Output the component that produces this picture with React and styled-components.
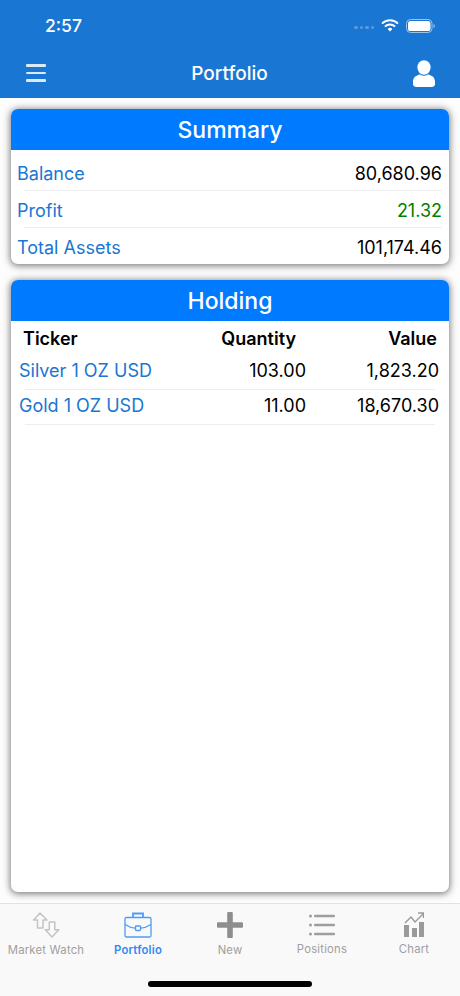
import React from "react";
import styled, { createGlobalStyle } from "styled-components";

const GlobalStyle = createGlobalStyle`
  html, body {
    margin: 0;
    padding: 0;
    background: #fff;
    font-family: Inter, "Liberation Sans", sans-serif;
  }
`;

const summary = [
  { label: "Balance", value: "80,680.96" },
  { label: "Profit", value: "21.32", green: true },
  { label: "Total Assets", value: "101,174.46", last: true },
];

const holdings = [
  { ticker: "Silver 1 OZ USD", quantity: "103.00", value: "1,823.20" },
  { ticker: "Gold 1 OZ USD", quantity: "11.00", value: "18,670.30" },
];

const App = () => {
  return (
    <Screen>
      <GlobalStyle />
      <TopBar>
        <StatusBar>
          <Clock>2:57</Clock>
          <StatusIcons>
            <Signal>
              <i /><i /><i /><i />
            </Signal>
            <svg width="18" height="13" viewBox="0 0 18 13">
              <path d="M1 4.600a11.500 11.500 0 0 1 16 0" fill="none" stroke="#fff" strokeWidth="2" />
              <path d="M3.900 7.600a7.400 7.400 0 0 1 10.200 0" fill="none" stroke="#fff" strokeWidth="2" />
              <path d="M6.600 10a3.500 3.500 0 0 1 4.800 0L9 12.600z" fill="#fff" />
            </svg>
            <svg width="29" height="14" viewBox="0 0 29 14">
              <rect x="0.500" y="0.500" width="25.500" height="13" rx="4" fill="none" stroke="#9cc3ec" />
              <rect x="2" y="2" width="22.500" height="10" rx="2.600" fill="#fff" />
              <path d="M27.500 5v4c.8-.3 1.300-1.100 1.300-2s-.5-1.700-1.300-2z" fill="#9cc3ec" />
            </svg>
          </StatusIcons>
        </StatusBar>
        <NavBar>
          <Burger>
            <span /><span /><span />
          </Burger>
          <NavTitle>Portfolio</NavTitle>
          <svg width="22" height="27" viewBox="0 0 22 27">
            <ellipse cx="11" cy="7.500" rx="6.600" ry="7.300" fill="#fff" />
            <path d="M7 14.500c2.400 1.700 5.600 1.700 8 0 4 .8 7 3.200 7 7v2.500c0 1.700-1.500 3-3.500 3h-15C1.500 27 0 25.700 0 24v-2.500c0-3.800 3-6.200 7-7z" fill="#fff" />
          </svg>
        </NavBar>
      </TopBar>

      <Content>
        <Card>
          <CardHeader>Summary</CardHeader>
          <SummaryList>
            {summary.map((row) => (
              <SummaryRow key={row.label} $last={row.last}>
                <RowLabel>{row.label}</RowLabel>
                <RowValue $green={row.green}>{row.value}</RowValue>
              </SummaryRow>
            ))}
          </SummaryList>
        </Card>

        <HoldingCard>
          <CardHeader>Holding</CardHeader>
          <TableHead>
            <span>Ticker</span>
            <HeadQty>Quantity</HeadQty>
            <HeadValue>Value</HeadValue>
          </TableHead>
          {holdings.map((row) => (
            <TableRow key={row.ticker}>
              <RowLabel>{row.ticker}</RowLabel>
              <QtyCell>{row.quantity}</QtyCell>
              <ValueCell>{row.value}</ValueCell>
            </TableRow>
          ))}
        </HoldingCard>
      </Content>

      <TabBar>
        <Tab>
          <TabIcon>
            <svg width="28" height="26" viewBox="0 0 28 26" fill="none" stroke="#c4c4c4" strokeWidth="1.500" strokeLinejoin="round">
              <path d="M8 1L1.500 8h4v8h5.500V8h4z" />
              <path d="M20 25l6.800-7.300h-4V10h-5.500v7.700h-4z" fill="#fafafa" />
            </svg>
          </TabIcon>
          <TabLabel>Market Watch</TabLabel>
        </Tab>
        <Tab>
          <TabIcon>
            <svg width="28" height="26" viewBox="0 0 28 26" fill="none" stroke="#4d9cf5" strokeWidth="1.300">
              <rect x="1" y="5.500" width="26" height="19.500" rx="1.500" />
              <path d="M9 5.500V1.500h10v4" strokeWidth="1.800" />
              <path d="M1 12.500c4 2.600 8 3.500 10.500 3.600M27 12.500c-4 2.600-8 3.500-10.500 3.600" />
              <rect x="11.500" y="14" width="5" height="4.500" rx="0.800" />
            </svg>
          </TabIcon>
          <TabLabel $active>Portfolio</TabLabel>
        </Tab>
        <Tab>
          <TabIcon>
            <svg width="28" height="26" viewBox="0 0 28 26">
              <rect x="11.200" y="0" width="5.600" height="26" rx="1" fill="#8e8e8e" />
              <rect x="1" y="10.200" width="26" height="5.600" rx="1" fill="#8e8e8e" />
            </svg>
          </TabIcon>
          <TabLabel>New</TabLabel>
        </Tab>
        <Tab>
          <TabIcon>
            <svg width="26" height="22" viewBox="0 0 26 22" fill="#9e9e9e">
              <circle cx="1.500" cy="2" r="1.500" />
              <circle cx="1.500" cy="11" r="1.500" />
              <circle cx="1.500" cy="20" r="1.500" />
              <rect x="5" y="0.700" width="21" height="2.600" rx="1" />
              <rect x="5" y="9.700" width="21" height="2.600" rx="1" />
              <rect x="5" y="18.700" width="21" height="2.600" rx="1" />
            </svg>
          </TabIcon>
          <TabLabel>Positions</TabLabel>
        </Tab>
        <Tab>
          <TabIcon>
            <svg width="20" height="25" viewBox="0 0 20 25" fill="#9a9a9a">
              <rect x="0" y="13" width="5" height="12" />
              <rect x="8" y="16" width="5" height="9" />
              <rect x="15" y="10" width="5" height="15" />
              <path d="M1 11l6-6 4 5 8.500-8.500M14 1h5.500v5" fill="none" stroke="#9a9a9a" strokeWidth="1.400" />
            </svg>
          </TabIcon>
          <TabLabel>Chart</TabLabel>
        </Tab>
        <HomeIndicator />
      </TabBar>
    </Screen>
  );
};

export default App;

const Screen = styled.div`
  width: 460px;
  height: 996px;
  display: flex;
  flex-direction: column;
  overflow: hidden;
  background: #fdfdfd;
`;
const TopBar = styled.header`
  height: 98px;
  flex: none;
  background: #1976d2;
  color: #fff;
`;
const StatusBar = styled.div`
  height: 51px;
  padding: 0 25px 0 45px;
  display: flex;
  align-items: center;
  justify-content: space-between;
`;
const Clock = styled.span`
  font-size: 17.500px;
  font-weight: 500;
`;
const StatusIcons = styled.div`
  display: flex;
  align-items: center;
  gap: 7px;
`;
const Signal = styled.div`
  display: flex;
  gap: 2px;
  margin-top: 4px;
  i {
    width: 3.500px;
    height: 3.500px;
    border-radius: 50%;
    background: #5a9be0;
  }
`;
const NavBar = styled.div`
  height: 44px;
  padding: 0 25px 0 26px;
  display: flex;
  align-items: center;
  justify-content: space-between;
`;
const Burger = styled.div`
  width: 20px;
  display: flex;
  flex-direction: column;
  gap: 5px;
  span {
    height: 2.500px;
    border-radius: 1px;
    background: #dbe9f8;
  }
`;
const NavTitle = styled.span`
  font-size: 19px;
  font-weight: 500;
`;
const Content = styled.main`
  flex: 1;
  min-height: 0;
  padding: 11px;
  display: flex;
  flex-direction: column;
  gap: 16px;
`;
const Card = styled.section`
  background: #fff;
  border-radius: 7px;
  overflow: hidden;
  box-shadow: 0 1px 7px 1px rgba(0, 0, 0, 0.5);
`;
const HoldingCard = styled(Card)`
  flex: 1;
`;
const CardHeader = styled.h2`
  margin: 0;
  height: 41px;
  line-height: 43px;
  background: #007aff;
  color: #fff;
  text-align: center;
  font-size: 23px;
  font-weight: 500;
`;
const SummaryList = styled.div`
  padding-top: 4px;
`;
const RowLabel = styled.span`
  color: #1976d2;
  font-size: 18px;
`;
const RowValue = styled.span`
  color: ${(p) => (p.$green ? "#008000" : "#000")};
  font-size: 18px;
`;
const SummaryRow = styled.div`
  height: ${(p) => (p.$last ? "36px" : "37px")};
  margin: 0 7px 0 13px;
  padding-top: 2px;
  display: flex;
  align-items: center;
  justify-content: space-between;
  box-sizing: border-box;
  border-bottom: ${(p) => (p.$last ? "none" : "1px solid #eee")};
  ${RowLabel} {
    margin-left: -7px;
  }
`;
const TableHead = styled.div`
  height: 34px;
  padding: 0 12px;
  display: grid;
  grid-template-columns: 158px 125px 1fr;
  align-items: center;
  color: #000;
  font-size: 18px;
  font-weight: 600;
`;
const HeadQty = styled.span`
  text-align: right;
  padding-right: 10px;
`;
const HeadValue = styled.span`
  text-align: right;
`;
const TableRow = styled.div`
  height: 35px;
  margin: 0 14px;
  padding-bottom: 3px;
  display: grid;
  grid-template-columns: 156px 125px 1fr;
  align-items: center;
  box-sizing: border-box;
  border-bottom: 1px solid #eee;
  ${RowLabel} {
    margin-left: -6px;
  }
`;
const QtyCell = styled.span`
  text-align: right;
  font-size: 18px;
`;
const ValueCell = styled.span`
  text-align: right;
  font-size: 18px;
  margin-right: -4px;
`;
const TabBar = styled.nav`
  position: relative;
  height: 93px;
  flex: none;
  box-sizing: border-box;
  border-top: 1px solid #e2e2e2;
  background: #f9f9f9;
  display: grid;
  grid-template-columns: repeat(5, 1fr);
  padding-top: 8px;
`;
const Tab = styled.div`
  display: flex;
  flex-direction: column;
  align-items: center;
  height: 44px;
`;
const TabIcon = styled.div`
  height: 26px;
  display: flex;
  align-items: center;
  justify-content: center;
`;
const TabLabel = styled.span`
  margin-top: 5px;
  font-size: 11.300px;
  letter-spacing: 0.2px;
  font-weight: ${(p) => (p.$active ? 600 : 400)};
  color: ${(p) => (p.$active ? "#2f8af5" : "#9f9f9f")};
`;
const HomeIndicator = styled.div`
  position: absolute;
  left: 148px;
  bottom: 9px;
  width: 164px;
  height: 6px;
  border-radius: 3px;
  background: #000;
`;
